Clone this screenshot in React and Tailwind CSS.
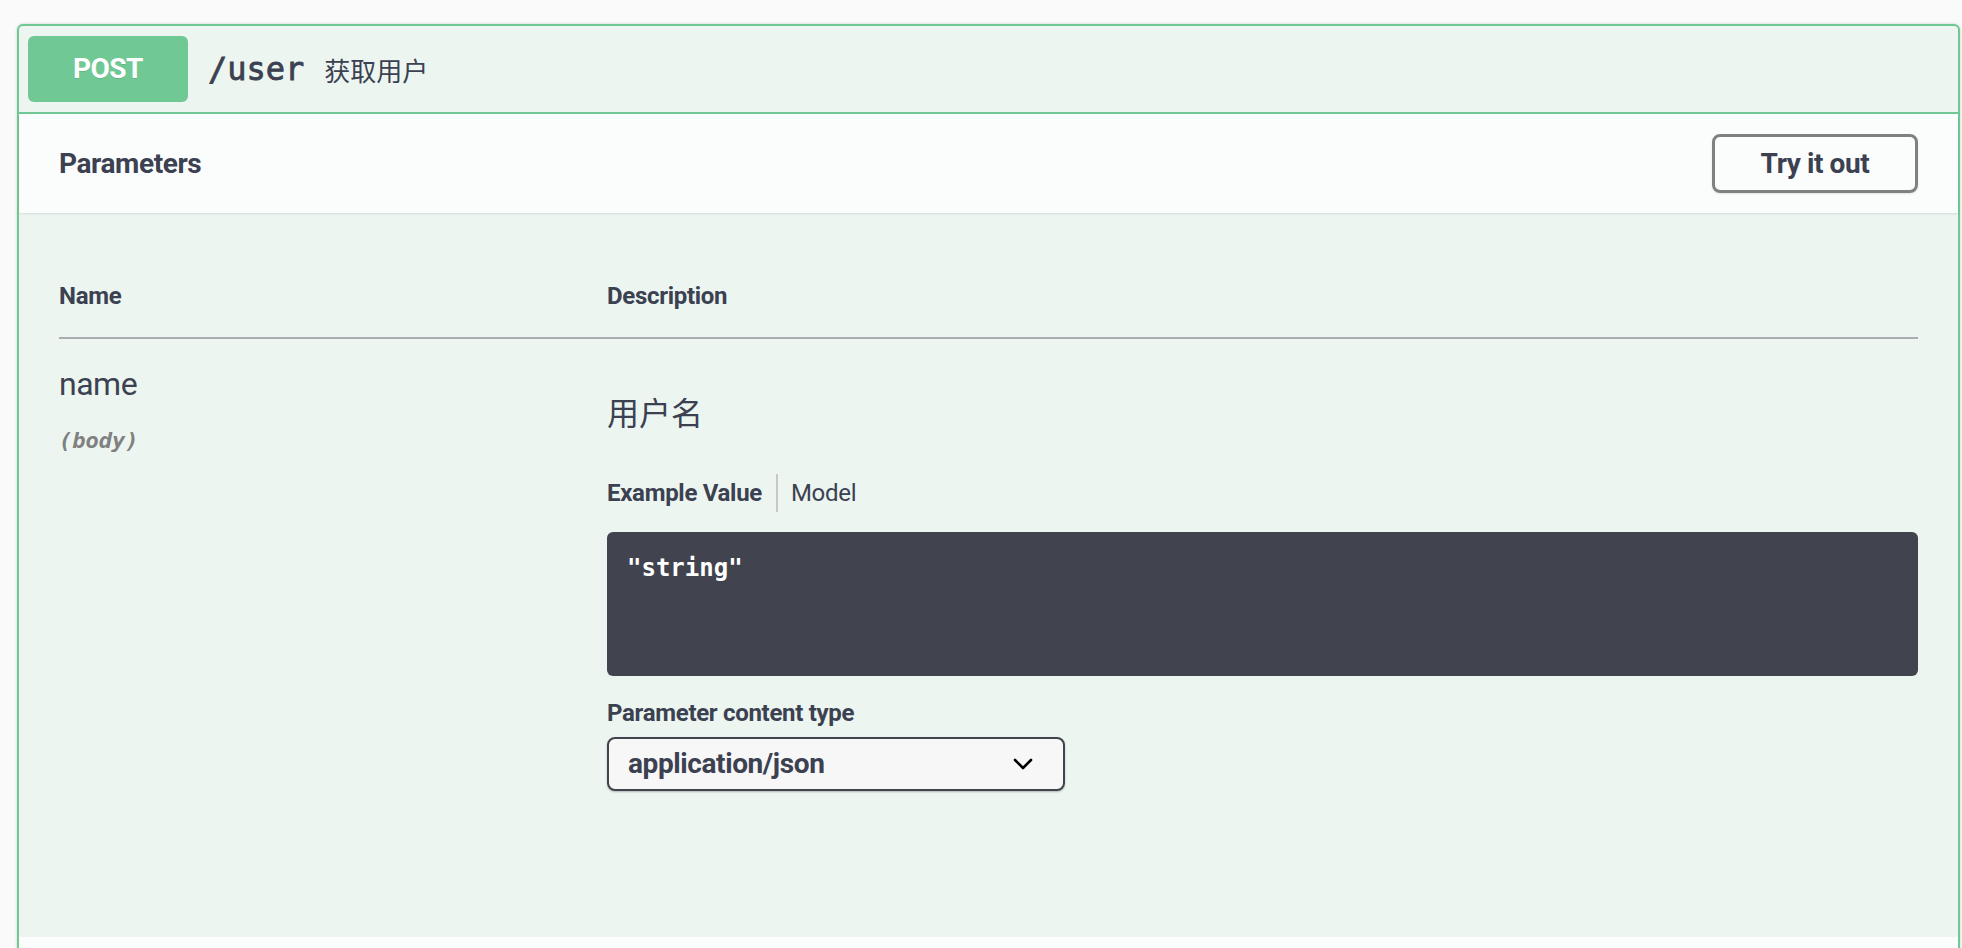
function Chevron() {
  return (
    <svg width="20" height="12" viewBox="0 0 20 12" fill="none">
      <path d="M2 2L10 10L18 2" stroke="#000" strokeWidth="2.6" strokeLinecap="round" strokeLinejoin="round" />
    </svg>
  );
}

export default function App() {
  return (
    <div className="h-screen overflow-hidden bg-[#fafafa] pt-[24px] pl-[17px] pr-[2px] text-[#3b4151] [font-family:Roboto,'Noto_Sans_CJK_SC',sans-serif]">
      <div className="rounded-[6px] border-2 border-[#70c994] bg-[#ecf5f0] shadow-[0_0_3px_rgba(0,0,0,0.19)]">
        <div className="flex items-center border-b-2 border-[#70c994] py-[10px] pl-[9px]">
          <div className="flex h-[66px] w-[160px] items-center justify-center rounded-[6px] bg-[#70c994] text-[28px] font-bold tracking-[-0.5px] text-white [text-shadow:0_1px_0_rgba(0,0,0,0.1)]">
            POST
          </div>
          <span className="ml-[20px] text-[32px] font-normal [-webkit-text-stroke:0.8px_#3b4151] [font-family:'DejaVu_Sans_Mono',monospace]">/user</span>
          <span className="ml-[20px] text-[26px] [font-family:'Noto_Sans_CJK_SC',sans-serif]">获取用户</span>
        </div>

        <div className="flex h-[99px] items-center justify-between bg-white/80 px-[40px] shadow-[0_1px_2px_rgba(0,0,0,0.1)]">
          <h4 className="text-[28px] font-bold tracking-[-0.4px]">Parameters</h4>
          <button className="h-[59px] w-[206px] rounded-[8px] border-[3px] border-[#808080] bg-transparent text-[28px] font-bold tracking-[-0.4px] text-[#3b4151] shadow-[0_1px_2px_rgba(0,0,0,0.1)]">
            Try it out
          </button>
        </div>

        <div className="px-[40px] pt-[40px] pb-[146px]">
          <div className="flex border-b-2 border-[#a8aeb0] pt-[29px] pb-[27px] text-[24px] font-bold leading-[28px] tracking-[-0.3px]">
            <div className="w-[548px]">Name</div>
            <div>Description</div>
          </div>
          <div className="flex">
            <div className="w-[548px] pt-[26px]">
              <div className="text-[32px] leading-[38px] tracking-[-0.5px]">name</div>
              <div className="mt-[25px] text-[22px] font-semibold italic leading-[26px] text-[#808080] [font-family:'DejaVu_Sans_Mono',monospace]">
                (body)
              </div>
            </div>
            <div className="flex-1 pt-[49px]">
              <div className="text-[32px] leading-[46px] [font-family:'Noto_Sans_CJK_SC',sans-serif]">用户名</div>
              <div className="mt-[40px] flex h-[38px] items-center text-[24px] leading-[28px] tracking-[-0.3px]">
                <span className="pr-[14px] font-bold">Example Value</span>
                <span className="h-full w-[2px] bg-[#c5c9c7]" />
                <span className="pl-[13px]">Model</span>
              </div>
              <div className="mt-[20px] h-[144px] rounded-[6px] bg-[#41444e] px-[20px] pt-[22px] text-[24px] font-bold leading-[28px] text-white [font-family:'DejaVu_Sans_Mono',monospace]">
                "string"
              </div>
              <div className="mt-[23px] text-[24px] font-bold leading-[28px] tracking-[-0.3px]">Parameter content type</div>
              <div className="mt-[10px] flex h-[54px] w-[458px] items-center justify-between rounded-[8px] border-2 border-[#41444e] bg-[#f7f7f7] pl-[19px] pr-[30px] text-[28px] font-bold tracking-[-0.4px] shadow-[0_1px_2px_rgba(0,0,0,0.25)]">
                <span>application/json</span>
                <Chevron />
              </div>
            </div>
          </div>
        </div>

        <div className="h-[100px] bg-white/80" />
      </div>
    </div>
  );
}
